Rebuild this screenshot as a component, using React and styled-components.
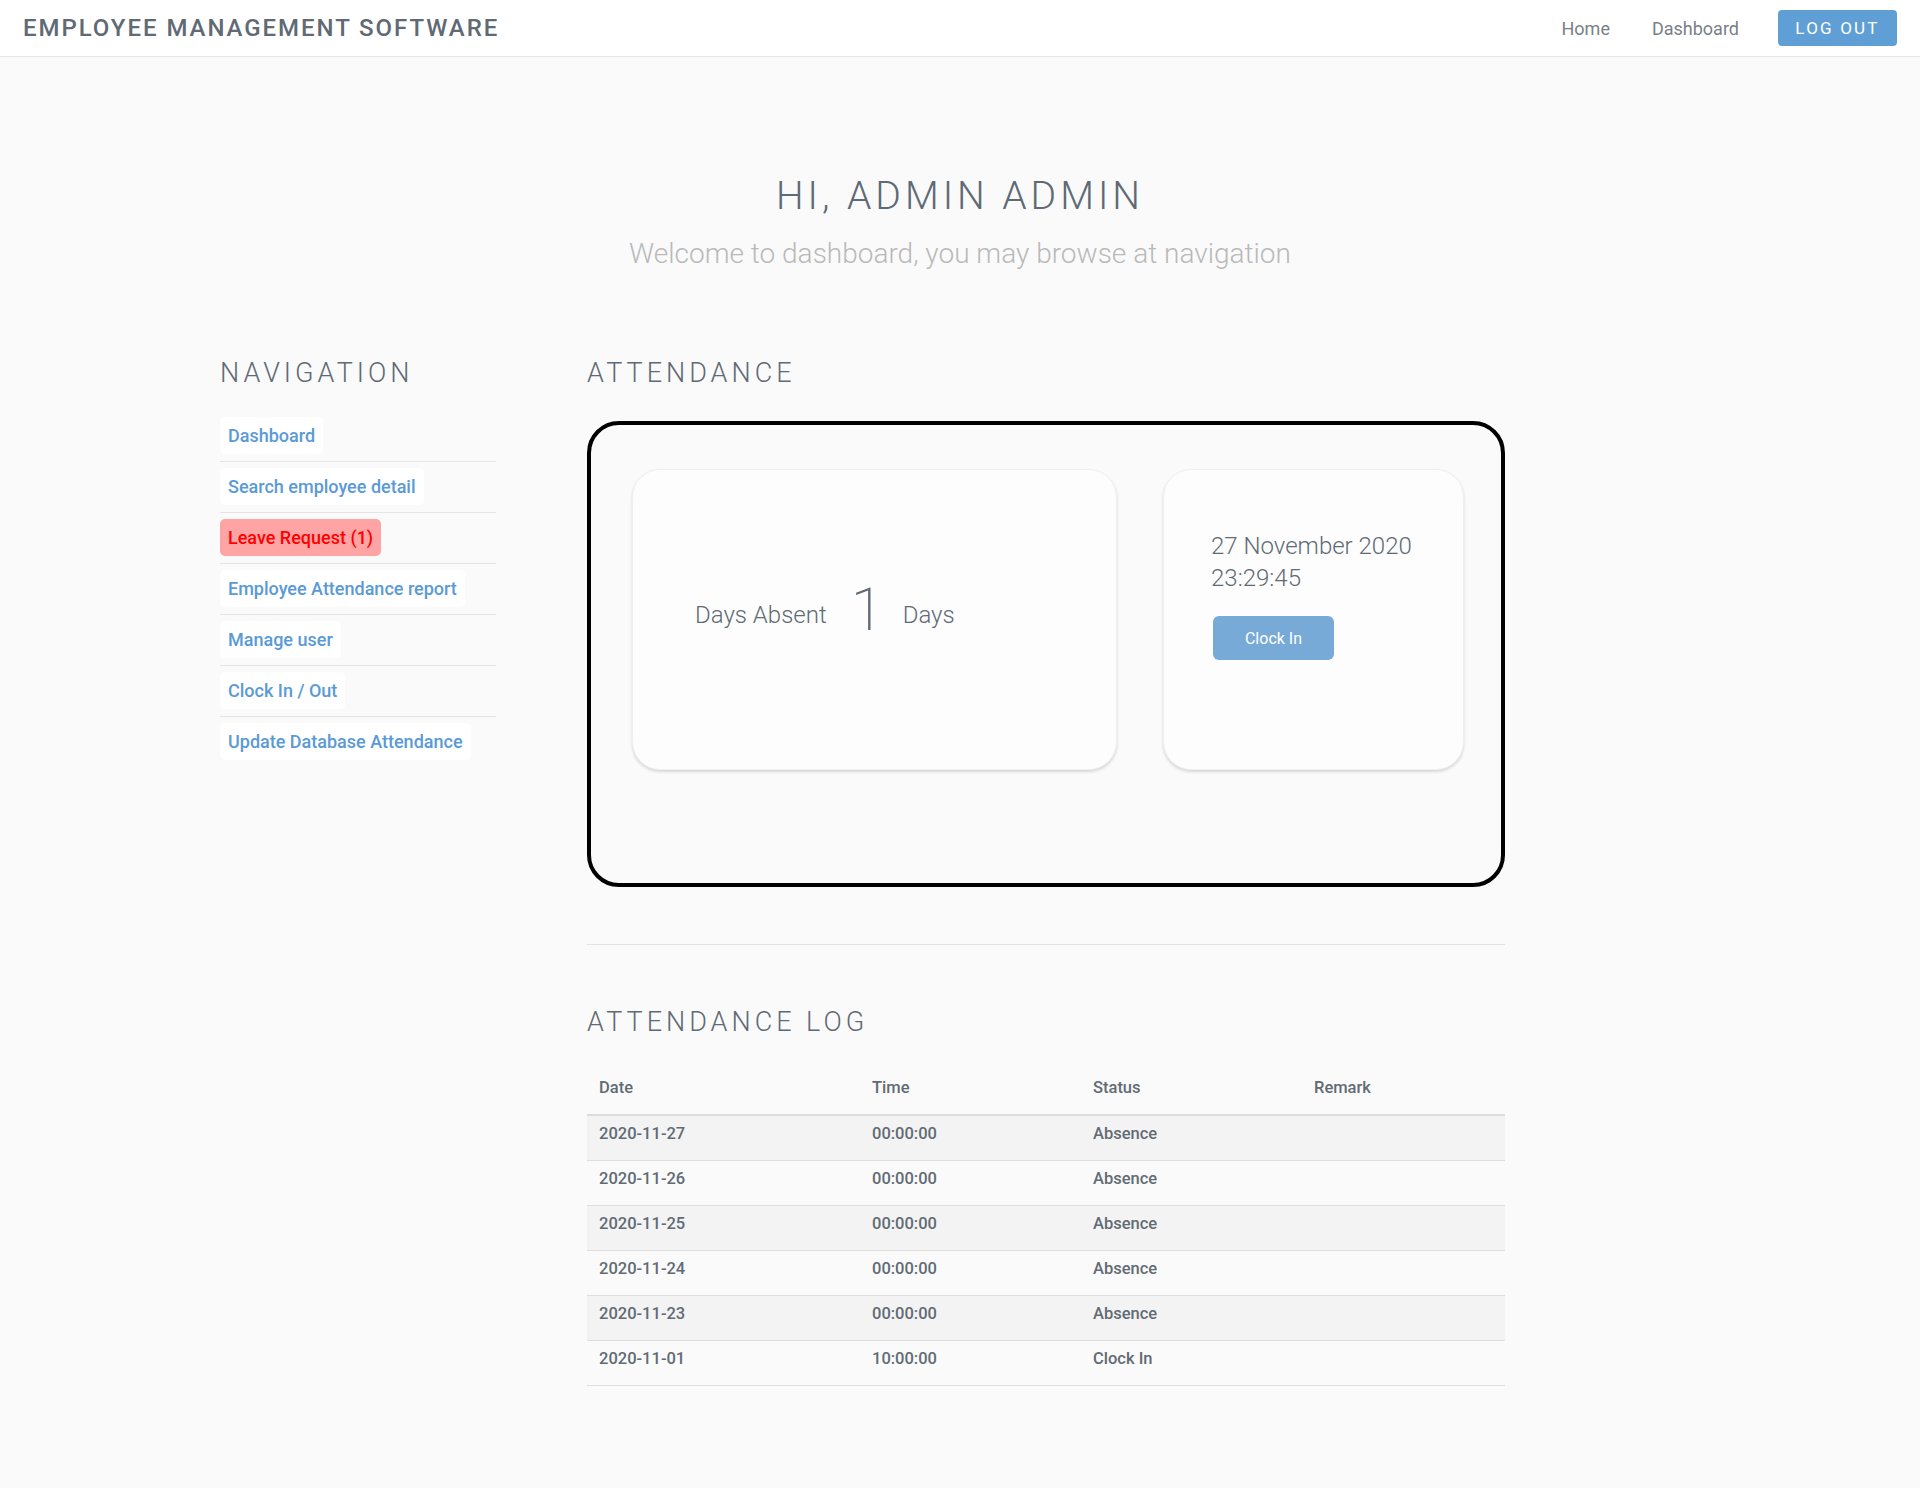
import React from "react";
import styled, { createGlobalStyle } from "styled-components";

const GlobalStyle = createGlobalStyle`
  * {
    box-sizing: border-box;
  }
  body {
    margin: 0;
    background-color: #fafafa;
    font-family: Roboto, "Liberation Sans", Arial, sans-serif;
    color: #5f6a75;
  }
`;

const Page = styled.div`
  min-height: 1488px;
  background-color: #fafafa;
`;

const TopBar = styled.header`
  height: 57px;
  background-color: #ffffff;
  border-bottom: 1px solid #e6e6e6;
  display: flex;
  align-items: center;
  justify-content: space-between;
  padding: 0 23px 0 23px;
`;

const Brand = styled.div`
  font-size: 24px;
  font-weight: 500;
  letter-spacing: 1.95px;
  color: #5f6a75;
  text-transform: uppercase;
`;

const TopNav = styled.nav`
  display: flex;
  align-items: center;
`;

const TopLink = styled.a`
  font-size: 18px;
  font-weight: 400;
  color: #7a8088;
  text-decoration: none;
  padding: 0 21px;
  &:last-of-type {
    padding-right: 39px;
  }
`;

const LogoutButton = styled.button`
  width: 119px;
  height: 36px;
  border: none;
  border-radius: 4px;
  background-color: #5f9fd6;
  color: #ffffff;
  font-family: inherit;
  font-size: 17px;
  letter-spacing: 2.2px;
  cursor: pointer;
`;

const Hero = styled.section`
  text-align: center;
  padding-top: 115px;
`;

const Greeting = styled.h1`
  margin: 0;
  font-size: 39px;
  font-weight: 300;
  letter-spacing: 4px;
  line-height: 48px;
  color: #5f6a75;
`;

const Welcome = styled.p`
  margin: 16px 0 0;
  font-size: 28px;
  font-weight: 300;
  line-height: 36px;
  color: #b9b9b9;
`;

const Body = styled.div`
  display: grid;
  grid-template-columns: 276px 918px;
  column-gap: 91px;
  padding-left: 220px;
  padding-top: 83px;
  padding-bottom: 100px;
`;

const SectionTitle = styled.h2`
  margin: 0;
  font-size: 27px;
  font-weight: 300;
  letter-spacing: 4px;
  line-height: 36px;
  color: #5f6a75;
  text-transform: uppercase;
`;

const NavList = styled.ul`
  list-style: none;
  margin: 26px 0 0;
  padding: 0;
`;

const NavItem = styled.li`
  padding: 6px 0 7px;
  border-bottom: 1px solid #e4e4e4;
  &:first-child {
    padding-top: 0;
  }
  &:last-child {
    border-bottom: none;
  }
`;

const NavLink = styled.a`
  display: inline-block;
  padding: 8px 8px;
  font-size: 18px;
  line-height: 21px;
  font-weight: 500;
  text-decoration: none;
  border-radius: 5px;
  color: ${(p) => (p.alert ? "#ff0000" : "#5a9ad6")};
  background-color: ${(p) => (p.alert ? "#ffa4a4" : "#ffffff")};
`;

const Main = styled.main`
  display: flex;
  flex-direction: column;
`;

const AttendanceBox = styled.div`
  margin-top: 30px;
  height: 466px;
  border: 4px solid #000000;
  border-radius: 32px;
  padding: 44px 37px 0 41px;
  display: flex;
  gap: 46px;
  align-items: flex-start;
`;

const Card = styled.div`
  width: ${(p) => p.width}px;
  height: 301px;
  background-color: #fdfdfd;
  border: 1px solid #efefef;
  border-radius: 28px;
  box-shadow: 0 2px 3px rgba(0, 0, 0, 0.14);
`;

const AbsentCard = styled(Card)`
  display: flex;
  align-items: center;
  padding-left: 62px;
  padding-bottom: 10px;
  color: #5f6a75;
`;

const AbsentLabel = styled.span`
  font-size: 24px;
  font-weight: 300;
`;

const AbsentCount = styled.span`
  font-size: 60px;
  font-weight: 200;
  margin: 0 19px 0 24px;
  line-height: 1;
  position: relative;
  top: -5px;
`;

const ClockCard = styled(Card)`
  padding: 60px 20px 0 47px;
  color: #5f6a75;
`;

const DateText = styled.div`
  font-size: 24px;
  font-weight: 300;
  line-height: 32px;
`;

const ClockButton = styled.button`
  margin: 22px 0 0 2px;
  width: 121px;
  height: 44px;
  border: none;
  border-radius: 6px;
  background-color: #78aad8;
  color: #ffffff;
  font-family: inherit;
  font-size: 16px;
  cursor: pointer;
`;

const Divider = styled.hr`
  margin: 57px 0 0;
  border: none;
  border-top: 1px solid #e3e3e3;
`;

const LogTitle = styled(SectionTitle)`
  margin-top: 59px;
`;

const Table = styled.table`
  margin-top: 29px;
  width: 100%;
  border-collapse: collapse;
  font-size: 16.5px;
  font-weight: 500;
  color: #616b74;
`;

const Th = styled.th`
  text-align: left;
  font-weight: 500;
  padding: 8px 12px 16px;
  line-height: 21px;
  border-bottom: 2px solid #dcdcdc;
  width: ${(p) => p.width}px;
`;

const Row = styled.tr`
  background-color: ${(p) => (p.striped ? "#f3f3f3" : "#fafafa")};
  border-bottom: 1px solid #dedede;
`;

const Td = styled.td`
  padding: 7px 12px 16px;
  line-height: 21px;
`;

const navItems = [
  { label: "Dashboard" },
  { label: "Search employee detail" },
  { label: "Leave Request (1)", alert: true },
  { label: "Employee Attendance report" },
  { label: "Manage user" },
  { label: "Clock In / Out" },
  { label: "Update Database Attendance" },
];

const logs = [
  ["2020-11-27", "00:00:00", "Absence", ""],
  ["2020-11-26", "00:00:00", "Absence", ""],
  ["2020-11-25", "00:00:00", "Absence", ""],
  ["2020-11-24", "00:00:00", "Absence", ""],
  ["2020-11-23", "00:00:00", "Absence", ""],
  ["2020-11-01", "10:00:00", "Clock In", ""],
];

export default function App() {
  return (
    <Page>
      <GlobalStyle />
      <TopBar>
        <Brand>Employee Management Software</Brand>
        <TopNav>
          <TopLink href="#">Home</TopLink>
          <TopLink href="#">Dashboard</TopLink>
          <LogoutButton>LOG OUT</LogoutButton>
        </TopNav>
      </TopBar>

      <Hero>
        <Greeting>HI, ADMIN ADMIN</Greeting>
        <Welcome>Welcome to dashboard, you may browse at navigation</Welcome>
      </Hero>

      <Body>
        <aside>
          <SectionTitle>Navigation</SectionTitle>
          <NavList>
            {navItems.map((item) => (
              <NavItem key={item.label}>
                <NavLink href="#" alert={item.alert}>
                  {item.label}
                </NavLink>
              </NavItem>
            ))}
          </NavList>
        </aside>

        <Main>
          <SectionTitle>Attendance</SectionTitle>
          <AttendanceBox>
            <AbsentCard width={485}>
              <AbsentLabel>Days Absent</AbsentLabel>
              <AbsentCount>1</AbsentCount>
              <AbsentLabel>Days</AbsentLabel>
            </AbsentCard>
            <ClockCard width={301}>
              <DateText>27 November 2020</DateText>
              <DateText>23:29:45</DateText>
              <ClockButton>Clock In</ClockButton>
            </ClockCard>
          </AttendanceBox>

          <Divider />

          <LogTitle>Attendance Log</LogTitle>
          <Table>
            <thead>
              <tr>
                <Th width={273}>Date</Th>
                <Th width={221}>Time</Th>
                <Th width={221}>Status</Th>
                <Th>Remark</Th>
              </tr>
            </thead>
            <tbody>
              {logs.map((row, i) => (
                <Row key={row[0]} striped={i % 2 === 0}>
                  {row.map((cell, j) => (
                    <Td key={j}>{cell}</Td>
                  ))}
                </Row>
              ))}
            </tbody>
          </Table>
        </Main>
      </Body>
    </Page>
  );
}
